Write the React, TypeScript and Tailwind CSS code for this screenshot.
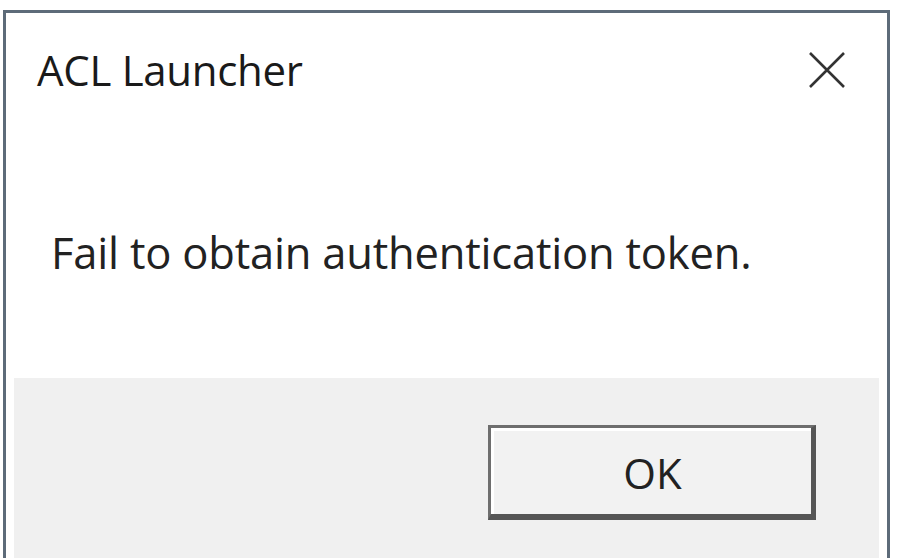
import React from "react";

export default function App() {
  const font = { fontFamily: '"Open Sans", "Noto Sans", sans-serif' };
  return (
    <div className="w-[901px] h-[558px] bg-white overflow-hidden" style={font}>
      <div className="ml-[3px] mt-[10px] w-[887px] h-[548px] border-t-[3px] border-l-[3px] border-r-[3px] border-[#5d6b79] bg-white flex flex-col">
        <div className="h-[114px] flex items-center justify-between pl-[31px] pr-[41px]">
          <span className="text-[42px] leading-none text-[#1a1a1a] tracking-[-0.3px]">ACL Launcher</span>
          <svg width="38" height="38" viewBox="0 0 38 38" className="text-[#333]">
            <path d="M2 2 L36 36 M36 2 L2 36" stroke="currentColor" strokeWidth="2.6" fill="none" />
          </svg>
        </div>
        <div className="h-[251px] flex items-center pl-[45px]">
          <span className="text-[43.5px] leading-none text-[#222] tracking-[-0.2px]">
            Fail to obtain authentication token.
          </span>
        </div>
        <div className="flex-1 mx-[8px] bg-[#f0f0f0] flex justify-end items-start pt-[47px] pr-[63px]">
          <div className="w-[328px] h-[95px] border-[3px] border-[#6e6e6e] border-b-[6px] border-r-[5px] border-b-[#555] border-r-[#555] bg-[#f2f2f2] flex items-center justify-center">
            <div className="w-full h-full border-t-[3px] border-l-[3px] border-white flex items-center justify-center">
              <span className="text-[42px] leading-none text-[#222]">OK</span>
            </div>
          </div>
        </div>
      </div>
    </div>
  );
}
